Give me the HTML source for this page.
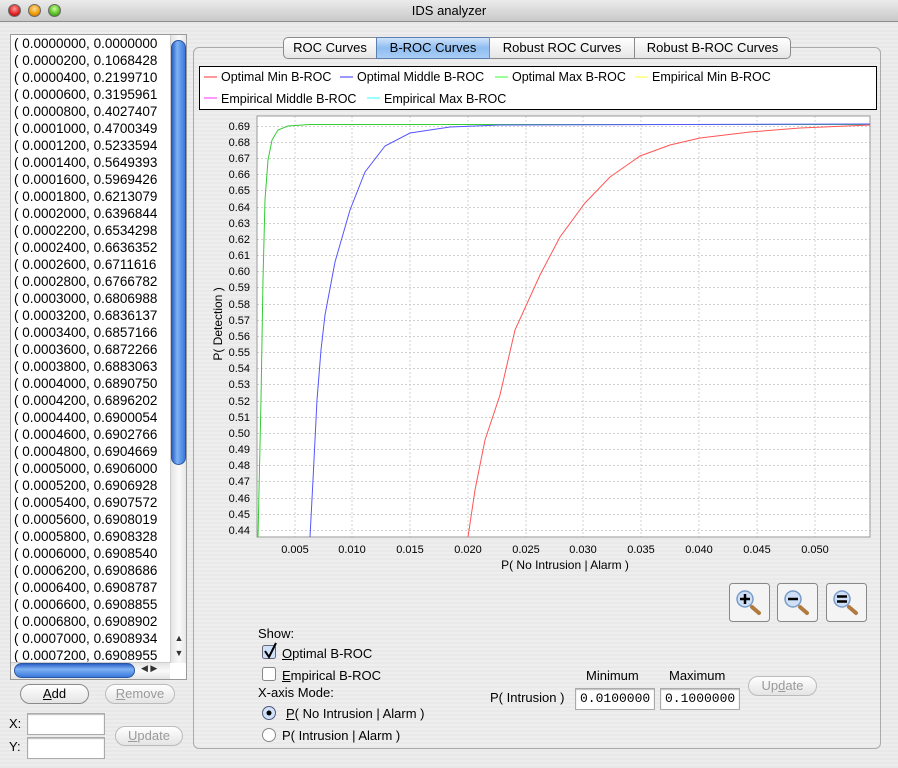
<!DOCTYPE html>
<html><head><meta charset="utf-8"><style>
*{margin:0;padding:0;box-sizing:border-box}
body{width:898px;height:768px;overflow:hidden;font-family:"Liberation Sans",sans-serif;font-size:13px;color:#000;
background:repeating-linear-gradient(#ededed 0 2px,#e8e8e8 2px 4px);position:relative}
.a{position:absolute}
#title{left:0;top:0;width:898px;height:22px;background:linear-gradient(#ebebeb,#c9c9c9);border-bottom:1px solid #8e8e8e;text-align:center;line-height:22px;font-size:13px}
.dot{width:13px;height:13px;border-radius:50%;top:4px;border:1px solid #6a6a6a}
#list{left:10px;top:34px;width:177px;height:646px;background:#fff;border:1px solid #9a9a9a;overflow:hidden}
.row{position:absolute;left:3px;font-size:13.5px;white-space:nowrap;line-height:17px}
.btn{border:1px solid #8a8a8a;border-radius:11px;background:linear-gradient(#fff,#e4e4e4);text-align:center;font-size:13px;line-height:18px;height:20px}
.dis{color:#9a9a9a;border-color:#bbb}
.tf{background:#fff;border:1px solid #aaa;box-shadow:inset 0 1px 1px #bbb}
.tab{top:37px;height:22px;line-height:20px;text-align:center;border:1px solid #8a8a8a;background:linear-gradient(#fff,#e6e6e6);font-size:13px}
</style></head><body>
<div id="title" class="a">IDS analyzer</div>
<div class="a dot" style="left:8px;background:radial-gradient(circle at 50% 35%,#f99,#d22 60%,#900)"></div>
<div class="a dot" style="left:28px;background:radial-gradient(circle at 50% 35%,#fd9,#e90 60%,#a50)"></div>
<div class="a dot" style="left:48px;background:radial-gradient(circle at 50% 35%,#cf9,#5b2 60%,#270)"></div>

<div id="list" class="a">
<div class="row" style="top:0">( 0.0000000, 0.0000000</div>
<div class="row" style="top:17px">( 0.0000200, 0.1068428</div>
<div class="row" style="top:34px">( 0.0000400, 0.2199710</div>
<div class="row" style="top:51px">( 0.0000600, 0.3195961</div>
<div class="row" style="top:68px">( 0.0000800, 0.4027407</div>
<div class="row" style="top:85px">( 0.0001000, 0.4700349</div>
<div class="row" style="top:102px">( 0.0001200, 0.5233594</div>
<div class="row" style="top:119px">( 0.0001400, 0.5649393</div>
<div class="row" style="top:136px">( 0.0001600, 0.5969426</div>
<div class="row" style="top:153px">( 0.0001800, 0.6213079</div>
<div class="row" style="top:170px">( 0.0002000, 0.6396844</div>
<div class="row" style="top:187px">( 0.0002200, 0.6534298</div>
<div class="row" style="top:204px">( 0.0002400, 0.6636352</div>
<div class="row" style="top:221px">( 0.0002600, 0.6711616</div>
<div class="row" style="top:238px">( 0.0002800, 0.6766782</div>
<div class="row" style="top:255px">( 0.0003000, 0.6806988</div>
<div class="row" style="top:272px">( 0.0003200, 0.6836137</div>
<div class="row" style="top:289px">( 0.0003400, 0.6857166</div>
<div class="row" style="top:306px">( 0.0003600, 0.6872266</div>
<div class="row" style="top:323px">( 0.0003800, 0.6883063</div>
<div class="row" style="top:340px">( 0.0004000, 0.6890750</div>
<div class="row" style="top:357px">( 0.0004200, 0.6896202</div>
<div class="row" style="top:374px">( 0.0004400, 0.6900054</div>
<div class="row" style="top:391px">( 0.0004600, 0.6902766</div>
<div class="row" style="top:408px">( 0.0004800, 0.6904669</div>
<div class="row" style="top:425px">( 0.0005000, 0.6906000</div>
<div class="row" style="top:442px">( 0.0005200, 0.6906928</div>
<div class="row" style="top:459px">( 0.0005400, 0.6907572</div>
<div class="row" style="top:476px">( 0.0005600, 0.6908019</div>
<div class="row" style="top:493px">( 0.0005800, 0.6908328</div>
<div class="row" style="top:510px">( 0.0006000, 0.6908540</div>
<div class="row" style="top:527px">( 0.0006200, 0.6908686</div>
<div class="row" style="top:544px">( 0.0006400, 0.6908787</div>
<div class="row" style="top:561px">( 0.0006600, 0.6908855</div>
<div class="row" style="top:578px">( 0.0006800, 0.6908902</div>
<div class="row" style="top:595px">( 0.0007000, 0.6908934</div>
<div class="row" style="top:612px">( 0.0007200, 0.6908955</div>
<div class="a" style="left:159px;top:0;width:17px;height:628px;background:linear-gradient(90deg,#e4e4e4,#fafafa,#e4e4e4);border-left:1px solid #ccc"></div>
<div class="a" style="left:160px;top:5px;width:15px;height:425px;border-radius:8px;background:linear-gradient(90deg,#2c62c8,#7eb2f4 40%,#3a78dc);border:1px solid #2a55a0"></div>
<div class="a" style="left:160px;top:596px;width:16px;font-size:9px;line-height:15px;text-align:center;color:#333">▲<br>▼</div>
<div class="a" style="left:0;top:627px;width:159px;height:17px;background:linear-gradient(#e4e4e4,#fafafa,#e4e4e4);border-top:1px solid #ccc"></div>
<div class="a" style="left:3px;top:628px;width:121px;height:15px;border-radius:8px;background:linear-gradient(#2c62c8,#7eb2f4 40%,#3a78dc);border:1px solid #2a55a0"></div>
<div class="a" style="left:130px;top:628px;font-size:9px;color:#333">◀ ▶</div>
</div>

<div class="a btn" style="left:20px;top:684px;width:69px"><u>A</u>dd</div>
<div class="a btn dis" style="left:105px;top:684px;width:70px"><u>R</u>emove</div>
<div class="a" style="left:9px;top:716px">X:</div>
<div class="a tf" style="left:27px;top:713px;width:78px;height:22px"></div>
<div class="a" style="left:9px;top:739px">Y:</div>
<div class="a tf" style="left:27px;top:737px;width:78px;height:22px"></div>
<div class="a btn dis" style="left:115px;top:726px;width:68px"><u>U</u>pdate</div>

<div class="a" style="left:193px;top:47px;width:688px;height:702px;border:1px solid #aaa;border-radius:6px;background:repeating-linear-gradient(#eeeeee 0 2px,#e9e9e9 2px 4px)"></div>
<div class="a tab" style="left:283px;width:94px;border-radius:5px 0 0 5px">ROC Curves</div>
<div class="a tab" style="left:376px;width:114px;background:linear-gradient(#cfe3fb,#8fbdf0 50%,#a9cdf6);border-color:#5b7fae">B-ROC Curves</div>
<div class="a tab" style="left:489px;width:146px">Robust ROC Curves</div>
<div class="a tab" style="left:634px;width:157px;border-radius:0 5px 5px 0">Robust B-ROC Curves</div>

<svg class="a" style="left:0;top:0" width="898" height="768" font-family="Liberation Sans,sans-serif">
<rect x="199.5" y="66.5" width="677" height="43" fill="#fff" stroke="#000"/>
<g font-size="12.5">
<line x1="204" y1="77" x2="217" y2="77" stroke="#f99" stroke-width="2"/><text x="221" y="81">Optimal Min B-ROC</text>
<line x1="340" y1="77" x2="353" y2="77" stroke="#99f" stroke-width="2"/><text x="357" y="81">Optimal Middle B-ROC</text>
<line x1="495" y1="77" x2="508" y2="77" stroke="#9f9" stroke-width="2"/><text x="512" y="81">Optimal Max B-ROC</text>
<line x1="635" y1="77" x2="648" y2="77" stroke="#ff9" stroke-width="2"/><text x="652" y="81">Empirical Min B-ROC</text>
<line x1="204" y1="98" x2="217" y2="98" stroke="#f9f" stroke-width="2"/><text x="221" y="103">Empirical Middle B-ROC</text>
<line x1="367" y1="98" x2="380" y2="98" stroke="#9ff" stroke-width="2"/><text x="384" y="103">Empirical Max B-ROC</text>
</g>
<rect x="257" y="116" width="613" height="421" fill="#fff"/>
<g stroke="#d0d0d0" stroke-dasharray="2,2" stroke-width="1">
<path d="M295 116V537M352 116V537M410 116V537M468 116V537M526 116V537M583 116V537M641 116V537M699 116V537M757 116V537M815 116V537"/>
<path d="M257 126.5H870M257 142.5H870M257 158.5H870M257 174.5H870M257 190.5H870M257 207.5H870M257 223.5H870M257 239.5H870M257 255.5H870M257 271.5H870M257 287.5H870M257 304.5H870M257 320.5H870M257 336.5H870M257 352.5H870M257 368.5H870M257 384.5H870M257 401.5H870M257 417.5H870M257 433.5H870M257 449.5H870M257 465.5H870M257 481.5H870M257 498.5H870M257 514.5H870M257 530.5H870"/>
</g>
<path d="M257 116V537H870V116Z" fill="none" stroke="#999"/>
<g fill="none" stroke-width="1">
<path d="M258 537L261 400L263 280L265 200L268 160L272 140L278 130L288 126L310 124.5L870 124.5" stroke="#3c3"/>
<path d="M310 537L313 480L317 400L321 350L325 315L335 262L350 210L365 172L385 146L410 133L450 127L500 125L870 124" stroke="#55f"/>
<path d="M468 537L475 490L485 440L500 395L515 330L540 275L560 237L585 203L610 177L640 156L670 145L700 138L750 132L800 128L870 125" stroke="#f55"/>
</g>
<g font-size="11" text-anchor="end">
<text x="250" y="130">0.69</text><text x="250" y="146">0.68</text><text x="250" y="162">0.67</text><text x="250" y="178">0.66</text><text x="250" y="194">0.65</text><text x="250" y="211">0.64</text><text x="250" y="227">0.63</text><text x="250" y="243">0.62</text><text x="250" y="259">0.61</text><text x="250" y="275">0.60</text><text x="250" y="291">0.59</text><text x="250" y="308">0.58</text><text x="250" y="324">0.57</text><text x="250" y="340">0.56</text><text x="250" y="356">0.55</text><text x="250" y="372">0.54</text><text x="250" y="388">0.53</text><text x="250" y="405">0.52</text><text x="250" y="421">0.51</text><text x="250" y="437">0.50</text><text x="250" y="453">0.49</text><text x="250" y="469">0.48</text><text x="250" y="485">0.47</text><text x="250" y="502">0.46</text><text x="250" y="518">0.45</text><text x="250" y="534">0.44</text>
</g>
<g font-size="11" text-anchor="middle">
<text x="295" y="553">0.005</text><text x="352" y="553">0.010</text><text x="410" y="553">0.015</text><text x="468" y="553">0.020</text><text x="526" y="553">0.025</text><text x="583" y="553">0.030</text><text x="641" y="553">0.035</text><text x="699" y="553">0.040</text><text x="757" y="553">0.045</text><text x="815" y="553">0.050</text>
</g>
<text x="565" y="569" font-size="12" text-anchor="middle">P( No Intrusion | Alarm )</text>
<text transform="translate(222,324) rotate(-90)" font-size="12" text-anchor="middle">P( Detection )</text>
<g>
<rect x="729.5" y="583.5" width="40" height="38" rx="3" fill="#f4f4f4" stroke="#888"/>
<rect x="777.5" y="583.5" width="40" height="38" rx="3" fill="#f4f4f4" stroke="#888"/>
<rect x="826.5" y="583.5" width="40" height="38" rx="3" fill="#f4f4f4" stroke="#888"/>
<g stroke="#b07a40" stroke-width="4" stroke-linecap="round"><path d="M752 607L759 613M800 607L807 613M849 607L856 613"/></g>
<circle cx="745" cy="599" r="8" fill="#cde0f7" stroke="#7a9cc8" stroke-width="1.5"/>
<circle cx="793" cy="599" r="8" fill="#cde0f7" stroke="#7a9cc8" stroke-width="1.5"/>
<circle cx="842" cy="599" r="8" fill="#cde0f7" stroke="#7a9cc8" stroke-width="1.5"/>
<path d="M740 599H750M745 594V604M788 599H798M837 596.5H847M837 601.5H847" stroke="#000" stroke-width="2.5"/>
</g>
<rect x="262.5" y="645.5" width="13" height="13" rx="2" fill="#cfe2fa" stroke="#667"/>
<path d="M265 651L269 657L276 643" fill="none" stroke="#000" stroke-width="2"/>
<rect x="262.5" y="667.5" width="13" height="13" rx="2" fill="#fff" stroke="#888"/>
<circle cx="269" cy="713" r="6.5" fill="#cfe2fa" stroke="#557"/>
<circle cx="269" cy="713" r="2.5" fill="#000"/>
<circle cx="269" cy="735" r="6.5" fill="#fff" stroke="#888"/>
</svg>

<div class="a" style="left:258px;top:626px">Show:</div>
<div class="a" style="left:282px;top:646px"><u>O</u>ptimal B-ROC</div>
<div class="a" style="left:282px;top:668px"><u>E</u>mpirical B-ROC</div>
<div class="a" style="left:258px;top:685px">X-axis Mode:</div>
<div class="a" style="left:286px;top:706px"><u>P</u>( No Intrusion | Alarm )</div>
<div class="a" style="left:282px;top:728px">P( Intrusion | Alarm )</div>

<div class="a" style="left:586px;top:668px">Minimum</div>
<div class="a" style="left:669px;top:668px">Maximum</div>
<div class="a" style="left:490px;top:690px">P( Intrusion )</div>
<div class="a tf" style="left:575px;top:688px;width:80px;height:22px;font-family:'Liberation Mono',monospace;font-size:13px;line-height:20px;padding-left:4px">0.0100000</div>
<div class="a tf" style="left:660px;top:688px;width:80px;height:22px;font-family:'Liberation Mono',monospace;font-size:13px;line-height:20px;padding-left:4px">0.1000000</div>
<div class="a btn dis" style="left:748px;top:676px;width:69px">Up<u>d</u>ate</div>
</body></html>
